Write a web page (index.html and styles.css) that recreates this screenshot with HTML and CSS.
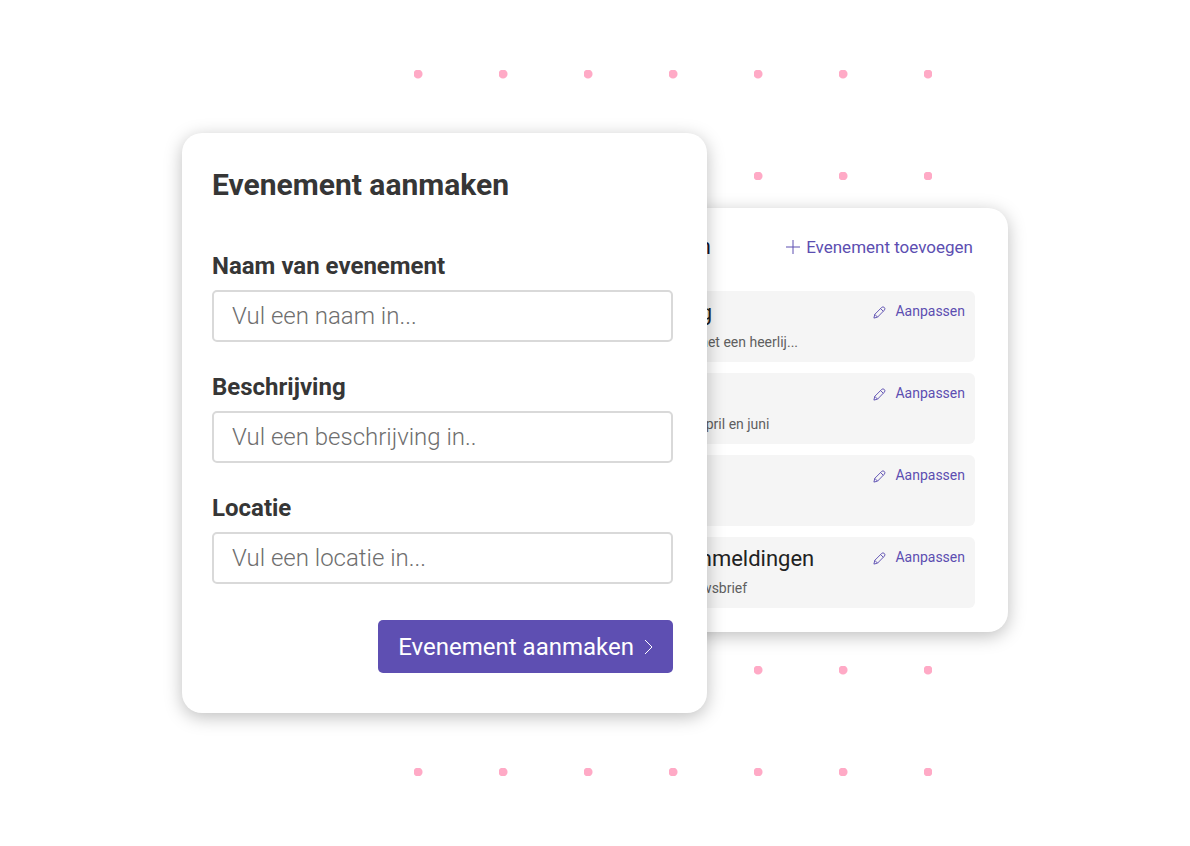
FILE: index.html
```html
<!DOCTYPE html>
<html lang="nl">
<head>
    <meta charset="UTF-8">
    <meta name="viewport" content="width=device-width, initial-scale=1">
    <title>Evenement aanmaken</title>
    <link rel="stylesheet" href="styles.css">
</head>
<body>
    <svg class="sprite" aria-hidden="true">
        <symbol id="pencil" viewBox="0 0 14 14">
            <path d="M1 13l.9-4L9.3 1.6a1.8 1.8 0 0 1 2.9 2.9L4.9 12zM1.9 9l3 3M8.2 2.8l2.9 2.9"/>
        </symbol>
    </svg>

    <main class="scene">
        <div class="dots">
            <div class="dot-rows"></div>
            <div class="dot-rows"></div>
        </div>

        <section class="card events">
            <header class="events-header">
                <h2>Alle evenementen</h2>
                <a href="#" class="add-link">
                    <svg width="14" height="14" viewBox="0 0 14 14"><path d="M7 0v14M0 7h14"/></svg>
                    Evenement toevoegen
                </a>
            </header>
            <ul class="event-list">
                <li class="event">
                    <div class="info">
                        <h3>Jaarvergadering</h3>
                        <p>Samen de Kerst vieren met een heerlij...</p>
                    </div>
                    <a href="#" class="edit-link"><svg><use href="#pencil"/></svg>Aanpassen</a>
                </li>
                <li class="event">
                    <div class="info">
                        <h3>Toernooi</h3>
                        <p>Elke donderdag tussen april en juni</p>
                    </div>
                    <a href="#" class="edit-link"><svg><use href="#pencil"/></svg>Aanpassen</a>
                </li>
                <li class="event">
                    <div class="info">
                        <h3>Open dag</h3>
                        <p>Kom gezellig langs</p>
                    </div>
                    <a href="#" class="edit-link"><svg><use href="#pencil"/></svg>Aanpassen</a>
                </li>
                <li class="event">
                    <div class="info">
                        <h3>Nieuwsbrief aanmeldingen</h3>
                        <p>Schrijf je in voor de nieuwsbrief</p>
                    </div>
                    <a href="#" class="edit-link"><svg><use href="#pencil"/></svg>Aanpassen</a>
                </li>
            </ul>
        </section>

        <form class="card create-form">
            <h1>Evenement aanmaken</h1>
            <div class="fields">
                <div class="field">
                    <label for="naam">Naam van evenement</label>
                    <input type="text" id="naam" placeholder="Vul een naam in...">
                </div>
                <div class="field">
                    <label for="beschrijving">Beschrijving</label>
                    <input type="text" id="beschrijving" placeholder="Vul een beschrijving in..">
                </div>
                <div class="field">
                    <label for="locatie">Locatie</label>
                    <input type="text" id="locatie" placeholder="Vul een locatie in...">
                </div>
            </div>
            <button type="button" class="submit">
                Evenement aanmaken
                <svg width="9" height="16" viewBox="0 0 9 16"><path d="M1 1l7 7-7 7"/></svg>
            </button>
        </form>
    </main>
</body>
</html>
```
FILE: styles.css
```css
* {
    box-sizing: border-box;
}
body {
    margin: 0;
    min-height: 100vh;
    display: flex;
    justify-content: center;
    align-items: center;
    background: #fff;
    font-family: Roboto, Arial, sans-serif;
    color: #363636;
}
h1, h2, h3, p, ul {
    margin: 0;
    padding: 0;
}
svg {
    fill: none;
    stroke: currentColor;
    stroke-width: 1;
    flex-shrink: 0;
}
a {
    color: #5c4eb1;
    text-decoration: none;
}
.sprite {
    display: none;
}

/* everything shares one grid cell, so the cards overlap */
.scene {
    display: grid;
    grid-template-columns: 100%;
    align-items: center;
    width: 100%;
    max-width: 826px;
}
.scene > * {
    grid-area: 1 / 1;
}
.card {
    background: #fff;
    border-radius: 20px;
    box-shadow: 0 4px 18px rgba(0, 0, 0, 0.26);
}

.dots {
    justify-self: end;
    display: flex;
    flex-direction: column;
    gap: 486px;
    width: 518px;
    margin-right: 76px;
}
.dot-rows {
    height: 110px;
    background: radial-gradient(circle at 4px 4px, #ffaac6 4px, transparent 5px) 0 0 / 85px 102px;
}

/* events list */
.events {
    justify-self: end;
    width: 61%;
    margin-bottom: 6px;
    padding: 24px 33px;
}
.events-header {
    display: flex;
    justify-content: space-between;
    align-items: center;
    margin-bottom: 29px;
    padding-right: 2px;
}
.events-header h2 {
    font-size: 22px;
    line-height: 30px;
    font-weight: 400;
    color: #14142b;
}
.add-link {
    display: flex;
    align-items: center;
    gap: 6px;
    font-size: 17px;
    line-height: 30px;
}
.event-list {
    display: flex;
    flex-direction: column;
    gap: 11px;
    list-style: none;
}
.event {
    display: flex;
    justify-content: space-between;
    align-items: flex-start;
    padding: 8px 10px 10px 16px;
    background: #f5f5f5;
    border-radius: 6px;
}
.event h3 {
    margin-bottom: 5px;
    font-size: 22px;
    line-height: 28px;
    font-weight: 400;
    color: #222;
}
.event p {
    font-size: 14px;
    line-height: 20px;
    color: #5f5f5f;
}
.edit-link {
    display: flex;
    align-items: center;
    gap: 9px;
    font-size: 14px;
    line-height: 24px;
}
.edit-link svg {
    width: 13px;
    height: 13px;
    margin-top: 2px;
}

/* form */
.create-form {
    justify-self: start;
    display: flex;
    flex-direction: column;
    width: 100%;
    max-width: 525px;
    padding: 33px 34px 40px 30px;
}
.create-form h1 {
    margin-bottom: 46px;
    font-size: 30px;
    line-height: 38px;
    font-weight: 700;
}
.fields {
    display: flex;
    flex-direction: column;
    gap: 29px;
}
.field {
    display: flex;
    flex-direction: column;
    gap: 8px;
}
.field label {
    font-size: 24px;
    line-height: 32px;
    font-weight: 700;
}
.field input {
    height: 52px;
    padding: 0 18px;
    border: 2px solid #d9d9d9;
    border-radius: 5px;
    background: #fff;
    font-family: inherit;
    font-size: 24px;
    font-weight: 300;
    color: #363636;
}
.field input::placeholder {
    color: #6e6e6e;
    opacity: 1;
}
.submit {
    align-self: flex-end;
    display: flex;
    align-items: center;
    gap: 10px;
    height: 53px;
    margin-top: 36px;
    padding: 0 20px;
    border: none;
    border-radius: 5px;
    background: #5e4fb2;
    color: #fff;
    font-family: inherit;
    font-size: 24px;
    cursor: pointer;
}
```
